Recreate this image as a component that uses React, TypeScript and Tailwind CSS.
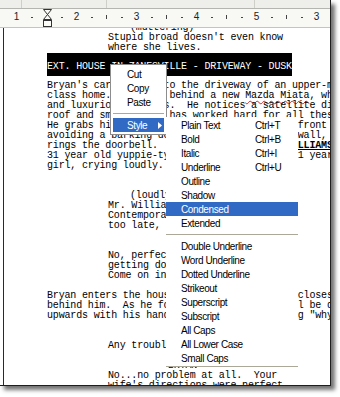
import React from "react";

type Indent = "a" | "d" | "p" | "c";

const pad: Record<Indent, string> = {
  a: "pl-[43px]",
  d: "pl-[104px]",
  p: "pl-[126px]",
  c: "pl-[164px]",
};

const Line: React.FC<{ k?: Indent; children?: React.ReactNode }> = ({ k = "a", children }) => (
  <div className={`h-[10px] leading-[10px] whitespace-pre ${pad[k]}`}>{children}</div>
);

const Blank = () => <div className="h-[10px]" />;

// ruler cells, 15px = quarter inch
const rulerCells = ["1", ".", "", ".", "2", ".", "|", ".", "3", ".", "|", ".", "4", ".", "|", ".", "5", ".", "|", ".", "3"];

const Ruler = () => (
  <>
    <div className="flex h-[9px] bg-[#eeeeea] border-b border-[#b4b4b0]">
      <div className="w-[22px] border-r border-[#cfcfca]" />
      <div className="w-[85px] border-r border-[#cfcfca]" />
      <div className="w-[148px] border-r border-[#cfcfca]" />
    </div>
    <div className="flex items-center h-[19px] pb-[2px] pl-[9px] bg-[#f8f8f5] border-b border-[#c4c4c0] text-[10px] text-[#222]">
      {rulerCells.map((c, i) => (
        <div key={i} className="w-[15px] flex justify-center items-center">
          {c === "." ? (
            <div className="w-[2px] h-[1px] bg-[#444]" />
          ) : c === "|" ? (
            <div className="w-[1px] h-[4px] bg-[#444]" />
          ) : (
            <span className="leading-none">{c}</span>
          )}
        </div>
      ))}
    </div>
    {/* indent marker */}
    <svg className="absolute left-[43px] top-[9px]" width="9" height="19" viewBox="0 0 9 19">
      <path d="M0.5 0.5 H8.5 L4.5 5.5 L8.5 10.5 H0.5 L4.5 5.5 Z" fill="#fbfbf8" stroke="#333" />
      <rect x="0.5" y="11.5" width="8" height="6" fill="#fbfbf8" stroke="#333" />
    </svg>
  </>
);

const MenuItem: React.FC<{ label: string; shortcut?: string; active?: boolean }> = ({ label, shortcut, active }) => (
  <div className={`h-[14px] flex items-center pl-[15px] ${active ? "bg-[#316ac5] text-white" : "text-black"}`}>
    <span className="w-[74px]">{label}</span>
    {shortcut && <span>{shortcut}</span>}
  </div>
);

const SubSep = () => (
  <div className="h-[9px] flex items-center">
    <div className="w-full h-[1px] bg-[#aca899]" />
  </div>
);

export default function App() {
  return (
    <div className="w-[340px] h-[397px] bg-white overflow-hidden">
      <div className="relative w-[331px] h-[386px] flex flex-col bg-white border-r border-b border-[#1e1e1e] shadow-[4px_4px_4px_rgba(0,0,0,0.55)] overflow-hidden font-['Liberation_Sans',Arial,sans-serif]">
        <Ruler />

        {/* page */}
        <div className="flex-1 ml-[3px] border-l border-[#2a2a2a] overflow-hidden bg-white">
          <div className="mt-[-5px] font-['Liberation_Mono','Courier_New',monospace] text-[10px] tracking-[-0.17px] text-black">
            <Line k="p">(muttering)</Line>
            <Line k="d">Stupid broad doesn't even know</Line>
            <Line k="d">where she lives.</Line>
            <div className="pl-[43px] mb-[5px] h-[23px]">
              <span className="inline-block bg-black text-white pt-[9px] pb-[4px] leading-[10px] whitespace-pre">
                EXT. HOUSE IN ZANESVILLE - DRIVEWAY - DUSK
              </span>
            </div>
            <Line>Bryan's car pulls into the driveway of an upper-middle</Line>
            <Line>
              {"class home. He parks behind a new "}
              <span className="underline decoration-wavy decoration-[#e02020] decoration-1 underline-offset-2">Mazda Miata</span>
              {", which"}
            </Line>
            <Line>and luxurious gardens.  He notices a satellite dish on the</Line>
            <Line>roof and smiles.  He has worked hard for all these</Line>
            <Line>He grabs his briefcase and walks up to the front door,</Line>
            <Line>avoiding a barking dog behind a low picket wall, and</Line>
            <Line>
              {"rings the doorbell.  Answering it is "}
              <span className="font-bold underline">MR. WILLIAMS</span>
              {","}
            </Line>
            <Line>31 year old yuppie-type, who holds a small 1 year old</Line>
            <Line>girl, crying loudly.</Line>
            <Blank />
            <Line k="c">BRYAN</Line>
            <Line k="p">(loudly)</Line>
            <Line k="d">Mr. Williams? Bryan Jennings,</Line>
            <Line k="d">Contemporary Homes. Hope I'm not</Line>
            <Line k="d">too late, the traffic was bad.</Line>
            <Blank />
            <Line k="c">MR. WILLIAMS</Line>
            <Line k="d">No, perfect timing. I was just</Line>
            <Line k="d">getting done with the dishes.</Line>
            <Line k="d">Come on in.</Line>
            <Blank />
            <Line>Bryan enters the house.  Mr. Williams then closes the door</Line>
            <Line>behind him.  As he follows Williams, he will be dazzled</Line>
            <Line>upwards with his hands open, as if wondering "why</Line>
            <Blank />
            <Line k="c">MR. WILLIAMS</Line>
            <Line k="d">Any trouble finding the place?</Line>
            <Blank />
            <Line k="c">BRYAN</Line>
            <Line k="d">No...no problem at all.  Your</Line>
            <Line k="d">wife's directions were perfect.</Line>
          </div>
        </div>

        {/* context menu */}
        <div className="absolute left-[110px] top-[64px] w-[57px] p-[2px] bg-white border border-[#8d8d8d] text-[10px] tracking-[-0.4px] text-black">
          <div className="h-[14px] flex items-center pl-[14px]">Cut</div>
          <div className="h-[14px] flex items-center pl-[14px]">Copy</div>
          <div className="h-[14px] flex items-center pl-[14px]">Paste</div>
          <div className="h-[9px] flex items-center">
            <div className="w-full h-[1px] bg-[#aca899]" />
          </div>
          <div className="h-[14px] flex items-center justify-between pl-[14px] pr-[2px] bg-[#316ac5] text-white">
            <span>Style</span>
            <svg width="4" height="7" viewBox="0 0 4 7">
              <polygon points="0,0 4,3.5 0,7" fill="#fff" />
            </svg>
          </div>
        </div>

        {/* style submenu */}
        <div className="absolute left-[166px] top-[117px] w-[132px] pt-[1px] pb-[1px] bg-white border-b border-[#aca899] text-[10px] tracking-[-0.4px]">
          <MenuItem label="Plain Text" shortcut="Ctrl+T" />
          <MenuItem label="Bold" shortcut="Ctrl+B" />
          <MenuItem label="Italic" shortcut="Ctrl+I" />
          <MenuItem label="Underline" shortcut="Ctrl+U" />
          <MenuItem label="Outline" />
          <MenuItem label="Shadow" />
          <MenuItem label="Condensed" active />
          <MenuItem label="Extended" />
          <SubSep />
          <MenuItem label="Double Underline" />
          <MenuItem label="Word Underline" />
          <MenuItem label="Dotted Underline" />
          <MenuItem label="Strikeout" />
          <MenuItem label="Superscript" />
          <MenuItem label="Subscript" />
          <MenuItem label="All Caps" />
          <MenuItem label="All Lower Case" />
          <MenuItem label="Small Caps" />
        </div>
      </div>
    </div>
  );
}
